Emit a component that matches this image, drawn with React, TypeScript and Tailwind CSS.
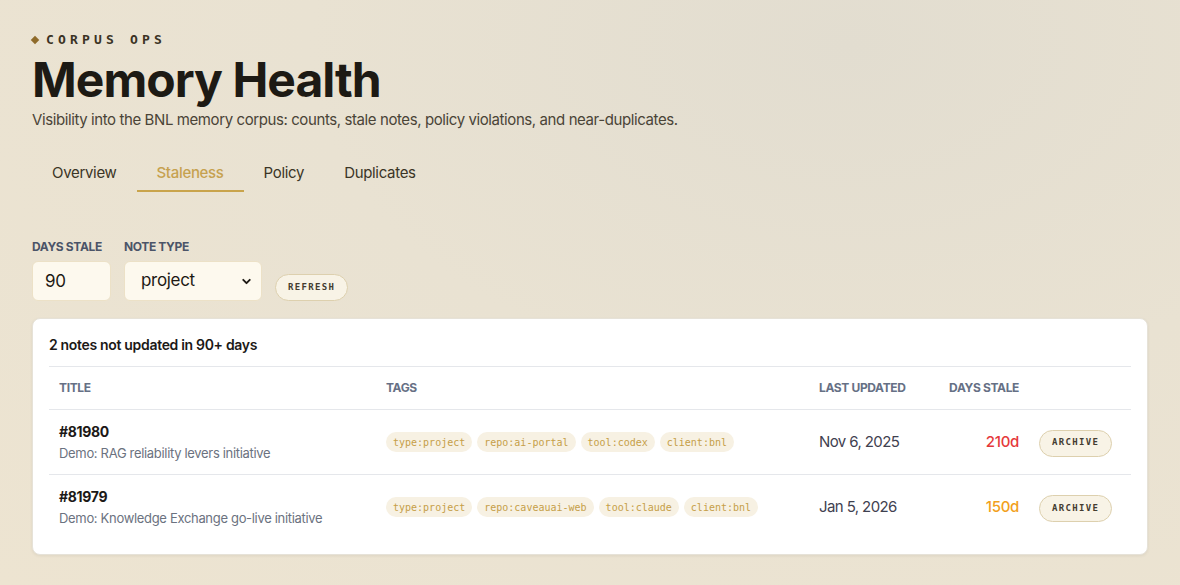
import React, { useState } from "react";
import { ChevronDown } from "lucide-react";

/** A note that has not been touched in a while */
interface StaleNote {
  id: number;
  title: string;
  tags: string[];
  updated: string;
  days: number;
}

const notes: StaleNote[] = [
  {
    id: 81980,
    title: "Demo: RAG reliability levers initiative",
    tags: ["type:project", "repo:ai-portal", "tool:codex", "client:bnl"],
    updated: "Nov 6, 2025",
    days: 210,
  },
  {
    id: 81979,
    title: "Demo: Knowledge Exchange go-live initiative",
    tags: ["type:project", "repo:caveauai-web", "tool:claude", "client:bnl"],
    updated: "Jan 5, 2026",
    days: 150,
  },
];

const tabs = ["Overview", "Staleness", "Policy", "Duplicates"];

const sans = "font-['Inter','Noto_Sans',sans-serif]";
const mono = "font-['DejaVu_Sans_Mono','Liberation_Mono',monospace]";

const Tag = ({ label }: { label: string }) => (
  <span
    className={`${mono} inline-flex items-center h-5 px-[7px] rounded-full bg-[#f7f1e3] text-[#c69f48] text-[10px] tracking-normal`}
  >
    {label}
  </span>
);

const PillButton = ({ children }: { children: React.ReactNode }) => (
  <button
    className={`${mono} h-[27px] px-3 rounded-full bg-[#f8f3e6] border border-[#ddd0ae] text-[#443c30] text-[9px] font-bold tracking-[0.15em] uppercase`}
  >
    {children}
  </button>
);

export default function App() {
  const [active, setActive] = useState("Staleness");
  const [days, setDays] = useState("90");
  const [type, setType] = useState("project");

  return (
    <div
      className={`${sans} min-h-screen px-8 pt-[31px] pb-[30px] bg-[radial-gradient(ellipse_at_72%_8%,#e2ddd0_0%,#e9e2d2_45%,#ede4d1_100%)] text-[#1d1a14] tracking-[-0.02em]`}
    >
      {/* header */}
      <div className="flex items-center gap-2 h-[18px]">
        <span className="w-[6px] h-[6px] rotate-45 bg-[#8f6b2a]" />
        <span className={`${mono} text-[13px] font-bold tracking-[0.32em] text-[#3b3324]`}>
          CORPUS OPS
        </span>
      </div>
      <h1 className="mt-[2px] text-[48px] leading-[58px] font-bold tracking-[-0.02em] text-[#1d1a14]">
        Memory Health
      </h1>
      <p className="mt-[1px] text-[15px] leading-5 text-[#4a4437] tracking-[-0.027em]">
        Visibility into the BNL memory corpus: counts, stale notes, policy violations, and near-duplicates.
      </p>

      {/* tabs */}
      <div className="mt-[26px] flex">
        {tabs.map((t) => (
          <button
            key={t}
            onClick={() => setActive(t)}
            className={`h-[36px] px-5 text-[15px] border-b-2 ${
              active === t
                ? "border-[#c9a44c] text-[#c6a14f] font-medium"
                : "border-transparent text-[#3b3526]"
            }`}
          >
            {t}
          </button>
        ))}
      </div>

      {/* filters */}
      <div className="mt-[46px] flex items-end gap-[13px]">
        <label className="flex flex-col gap-[5px]">
          <span className="text-[12px] font-bold tracking-[-0.03em] text-[#4b5468]">DAYS STALE</span>
          <input
            value={days}
            onChange={(e) => setDays(e.target.value)}
            className="w-[79px] h-[40px] px-[12px] rounded-md bg-[#fdf9ee] border border-[#ece1c7] text-[17px] text-[#1d1a14] outline-none"
          />
        </label>
        <label className="flex flex-col gap-[5px]">
          <span className="text-[12px] font-bold tracking-[-0.03em] text-[#4b5468]">NOTE TYPE</span>
          <div className="relative w-[138px] h-[40px] rounded-md bg-[#fdf9ee] border border-[#ece1c7]">
            <select
              value={type}
              onChange={(e) => setType(e.target.value)}
              className="w-full h-full appearance-none bg-transparent pl-4 text-[17px] text-[#1d1a14] outline-none"
            >
              <option>project</option>
              <option>decision</option>
              <option>reference</option>
            </select>
            <ChevronDown
              className="absolute right-[8px] top-[13px] w-[13px] h-[13px] text-[#1d1a14] pointer-events-none"
              strokeWidth={3.5}
            />
          </div>
        </label>
        <PillButton>Refresh</PillButton>
      </div>

      {/* stale notes card */}
      <div className="mt-[17px] bg-white rounded-lg border border-[#e6e2d8] shadow-[0_1px_3px_rgba(60,50,30,0.08)] px-4 pt-4 pb-[14px]">
        <div className="text-[14px] font-semibold text-[#1c1917] leading-[20px]">
          2 notes not updated in 90+ days
        </div>
        <table className="mt-[11px] w-full table-fixed border-collapse">
          <colgroup>
            <col className="w-[327px]" />
            <col className="w-[433px]" />
            <col className="w-[130px]" />
            <col className="w-[90px]" />
            <col />
          </colgroup>
          <thead>
            <tr className="border-y border-[#e5e7eb] h-[43px] text-[12px] font-bold text-[#667085] tracking-[-0.03em] whitespace-nowrap">
              <th className="px-[10px] text-left">TITLE</th>
              <th className="px-[10px] text-left">TAGS</th>
              <th className="px-[10px] text-left">LAST UPDATED</th>
              <th className="px-[10px] text-right">DAYS STALE</th>
              <th />
            </tr>
          </thead>
          <tbody>
            {notes.map((n, i) => (
              <tr
                key={n.id}
                className={`h-[65px] ${i < notes.length - 1 ? "border-b border-[#e5e7eb]" : ""}`}
              >
                <td className="px-[10px]">
                  <div className="text-[14px] font-bold text-[#1c1917] leading-[20px]">#{n.id}</div>
                  <div className="text-[13px] text-[#6b7280] leading-[18px] mt-[2px]">{n.title}</div>
                </td>
                <td className="px-[10px]">
                  <div className="flex gap-[5px]">
                    {n.tags.map((t) => (
                      <Tag key={t} label={t} />
                    ))}
                  </div>
                </td>
                <td className="px-[10px] text-[15px] text-[#3f4150] tracking-[-0.04em]">{n.updated}</td>
                <td
                  className={`px-[10px] text-right text-[15px] font-medium ${
                    n.days > 180 ? "text-[#e5393b]" : "text-[#f2a01c]"
                  }`}
                >
                  {n.days}d
                </td>
                <td className="px-[10px]">
                  <PillButton>Archive</PillButton>
                </td>
              </tr>
            ))}
          </tbody>
        </table>
      </div>
    </div>
  );
}
